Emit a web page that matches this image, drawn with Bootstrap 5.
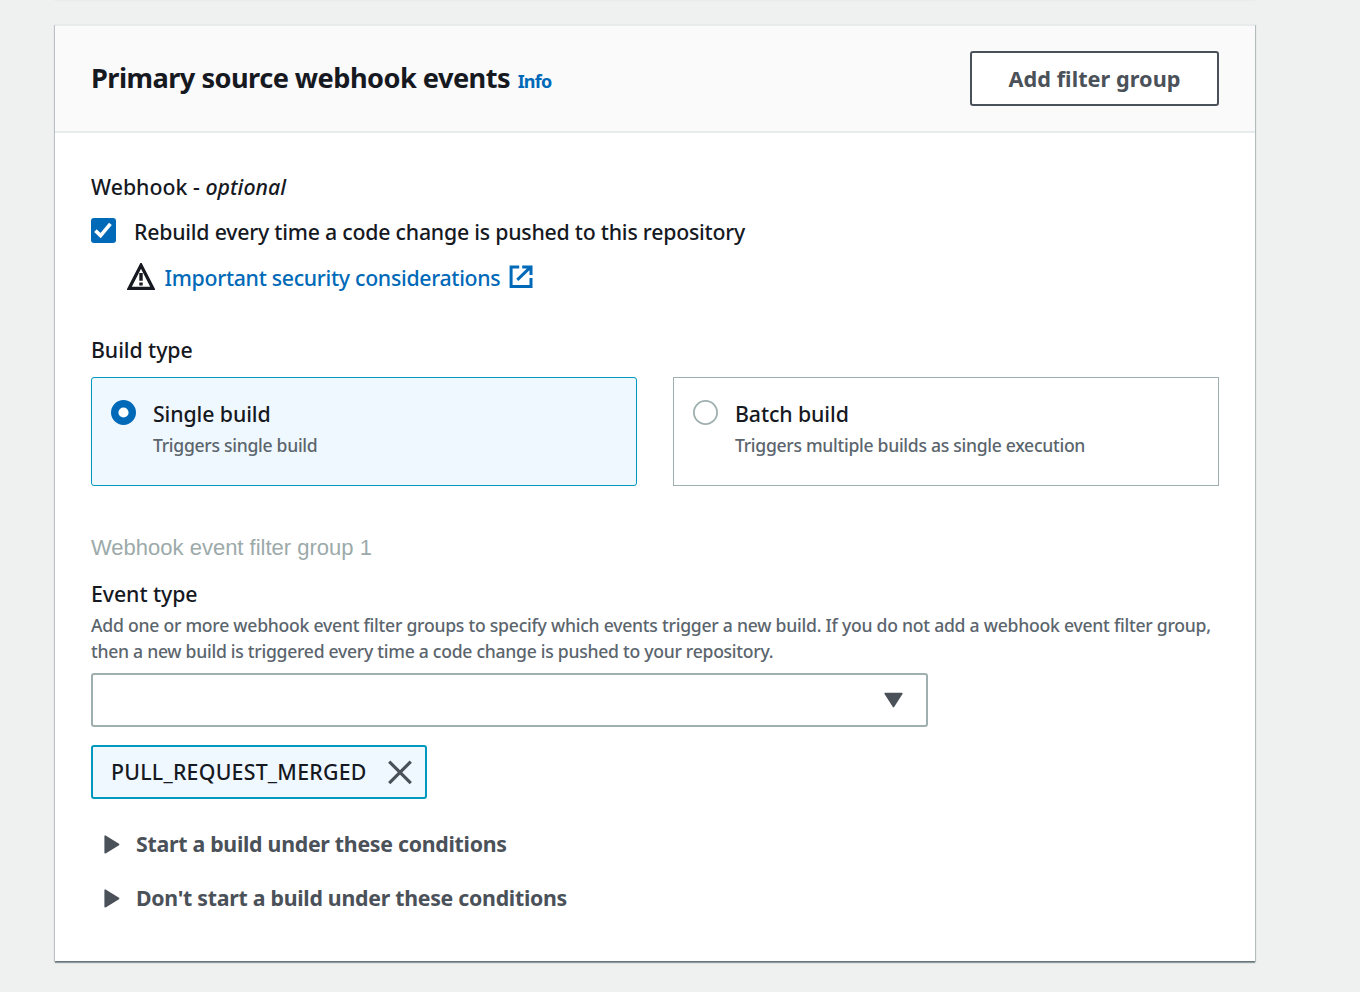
<!DOCTYPE html>
<html lang="en">
<head>
<meta charset="utf-8">
<meta name="viewport" content="width=device-width, initial-scale=1">
<title>Primary source webhook events</title>
<link href="https://cdn.jsdelivr.net/npm/bootstrap@5.3.0/dist/css/bootstrap.min.css" rel="stylesheet">
<style>
body{min-height:100vh;background:#eff1f1;font-family:"Noto Sans","Open Sans",sans-serif;font-size:21.3px;font-weight:500;line-height:30px;letter-spacing:-.07px;color:#16191f}
.prev-edge{height:1px;width:1201px;margin-left:54px;background:#e9ecec}
.panel{width:1200px;height:937px;margin:23px 0 0 55px;border:0;border-top:2px solid #e8ebeb;border-radius:0;background:#fff;color:inherit;box-shadow:0 2px 1px 0 rgba(0,28,36,.36),1px 1px 1px 0 rgba(0,28,36,.2),-1px 1px 1px 0 rgba(0,28,36,.17)}
.panel-head{height:107px;background:#fafafa;border-bottom:2px solid #e8ebeb;padding:0 36px}
.panel-title{font-size:27.2px;font-weight:700;line-height:40px;letter-spacing:-.54px;margin:0;padding-top:1px}
.info{font-size:18px;font-weight:700;margin-left:7.5px;letter-spacing:-.8px}
a,a:hover{color:#0069b8;text-decoration:none}
.btn-filter{width:249px;height:55px;border:2px solid #4b515b;border-radius:3px;background:#fff;color:#4b5159;font-size:21.7px;line-height:30px;font-weight:700;letter-spacing:.05px;padding:1px 0 0}
.panel-content{padding:39px 36px 0}
.webhook-label{letter-spacing:.02px}
.option-text{letter-spacing:-.23px}
.check-row{margin-top:15px;gap:18px}
.check-row svg{margin-top:1px}
.security{margin:16px 0 42px;padding-left:36px}
.security a{margin:0 9px 0 9.5px;letter-spacing:-.31px}
.external{margin-top:2px}
.hint{font-size:17.6px;line-height:26px;color:#5b656d;letter-spacing:-.28px}
.hint-first{letter-spacing:-.247px}
.tiles{gap:36px;margin:12px 0 47px}
.tile{height:109px;width:546px;border:1px solid #9fafaf;padding:21px 19px;gap:17px;letter-spacing:-.1px}
.tile.on{background:#f0f8ff;border-color:#0099bd;border-radius:3px}
.tile svg{margin-top:1px}
.tile .hint{margin-top:3px;letter-spacing:-.3px}
.group-name{font-family:"Liberation Sans",sans-serif;font-size:22px;font-weight:400;letter-spacing:0;color:#9caaaa;margin-bottom:16px}
.event-hint{margin-top:3px}
.picker{width:837px;height:54px;border:2px solid #9fafaf;border-radius:3px;padding-right:23px;margin-top:9px}
.token{width:336px;height:54px;border:2px solid #0099bd;border-radius:3px;background:#f0f8ff;padding:0 12.5px 0 18px;margin-top:18px;letter-spacing:.24px}
.cond{color:#4b5159;font-weight:700;letter-spacing:-.27px;padding-left:13px;gap:16px;margin-bottom:24px}
.cond-first{margin-top:30px}
svg{display:block;flex:none}
</style>
</head>
<body>
<div class="prev-edge"></div>
<main class="card panel">
  <header class="panel-head d-flex align-items-center justify-content-between">
    <h1 class="panel-title">Primary source webhook events<a href="#" class="info">Info</a></h1>
    <button type="button" class="btn btn-filter">Add filter group</button>
  </header>
  <div class="panel-content">
    <div class="webhook-label">Webhook - <em>optional</em></div>
    <div class="check-row d-flex">
      <svg width="25" height="25" viewBox="0 0 25 25"><rect width="25" height="25" rx="3" fill="#0069b8"/><path d="M4.4 12.6l5.2 5L19.4 5.8" fill="none" stroke="#fff" stroke-width="3.6"/></svg>
      <span class="option-text">Rebuild every time a code change is pushed to this repository</span>
    </div>
    <div class="security d-flex align-items-start">
      <svg width="28" height="28" viewBox="0 0 28 28"><path d="M14 2.2L25.9 25.4H2.1z" fill="none" stroke="#16191f" stroke-width="3.2"/><path d="M14 10v7.8M14 19.4v3.2" fill="none" stroke="#16191f" stroke-width="3.4"/></svg>
      <a href="#">Important security considerations</a>
      <svg class="external" width="24" height="24" viewBox="0 0 24 24" fill="none" stroke="#0069b8" stroke-width="3"><path d="M10.2 1.9H2.1v19.7h19.9v-8.6M13.2 1.9H22V10M21.2 2.4L8.3 14.8"/></svg>
    </div>
    <div>Build type</div>
    <div class="tiles d-flex">
      <div class="tile on d-flex">
        <svg width="25" height="25" viewBox="0 0 25 25"><circle cx="12.5" cy="12.5" r="8.8" fill="#fff" stroke="#0069b8" stroke-width="7.4"/></svg>
        <div><div>Single build</div><div class="hint">Triggers single build</div></div>
      </div>
      <div class="tile d-flex">
        <svg width="25" height="25" viewBox="0 0 25 25"><circle cx="12.5" cy="12.5" r="11.6" fill="#fff" stroke="#9fafaf" stroke-width="1.8"/></svg>
        <div><div>Batch build</div><div class="hint">Triggers multiple builds as single execution</div></div>
      </div>
    </div>
    <div class="group-name">Webhook event filter group 1</div>
    <div>Event type</div>
    <div class="hint event-hint text-nowrap"><span class="hint-first">Add one or more webhook event filter groups to specify which events trigger a new build. If you do not add a webhook event filter group,</span><br>then a new build is triggered every time a code change is pushed to your repository.</div>
    <div class="picker d-flex align-items-center justify-content-end">
      <svg width="19" height="16" viewBox="0 0 19 16"><path d="M1.2 1.5h16.6L9.5 14.5z" fill="#4b5159" stroke="#4b5159" stroke-width="1.6" stroke-linejoin="round"/></svg>
    </div>
    <div class="token d-flex align-items-center justify-content-between">
      <span>PULL_REQUEST_MERGED</span>
      <svg width="26" height="26" viewBox="0 0 26 26"><path d="M2.2 2.6l21.6 21.6M23.8 2.6l-21.6 21.6" stroke="#4b5159" stroke-width="3.2"/></svg>
    </div>
    <div class="cond cond-first d-flex align-items-center">
      <svg width="16" height="19" viewBox="0 0 16 19"><path d="M1.2 1.2v16.6L14.6 9.5z" fill="#4b5159" stroke="#4b5159" stroke-width="1.6" stroke-linejoin="round"/></svg>
      <span>Start a build under these conditions</span>
    </div>
    <div class="cond d-flex align-items-center">
      <svg width="16" height="19" viewBox="0 0 16 19"><path d="M1.2 1.2v16.6L14.6 9.5z" fill="#4b5159" stroke="#4b5159" stroke-width="1.6" stroke-linejoin="round"/></svg>
      <span>Don't start a build under these conditions</span>
    </div>
  </div>
</main>
<script src="https://cdn.jsdelivr.net/npm/bootstrap@5.3.0/dist/js/bootstrap.bundle.min.js"></script>
</body>
</html>
